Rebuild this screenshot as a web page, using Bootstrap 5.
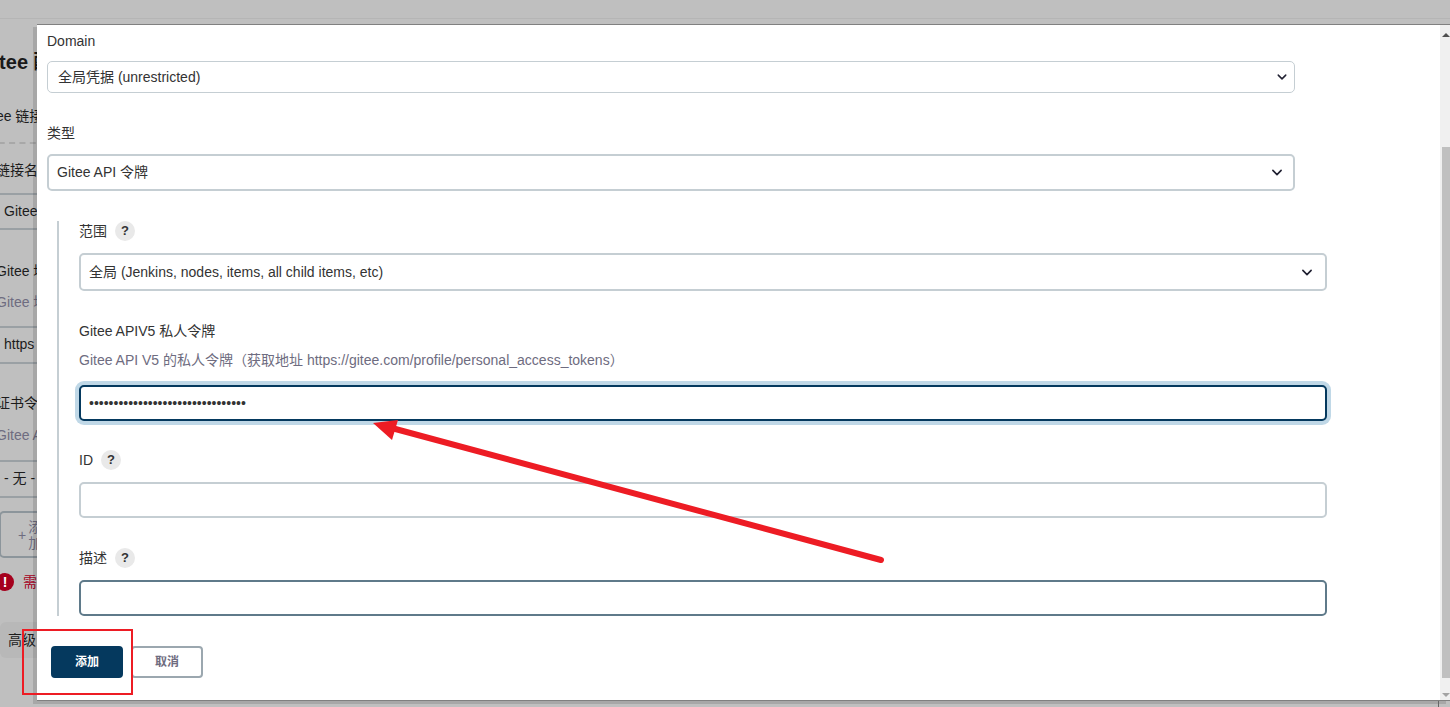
<!DOCTYPE html>
<html lang="zh">
<head>
<meta charset="utf-8">
<title>Gitee</title>
<link href="https://cdn.jsdelivr.net/npm/bootstrap@5.3.0/dist/css/bootstrap.min.css" rel="stylesheet">
<style>
html,body{height:100%;margin:0;overflow:hidden}
body{background:#bfbfbf;font-family:"Liberation Sans","Noto Sans CJK SC",sans-serif;font-size:14px;color:#333;position:relative}
.topbar{height:19px;border-bottom:1px solid #b5b5b5}
.behind{margin-left:-22px;width:120px;height:688px;color:#1c1c1c}
.behind h1{font-size:20px;font-weight:700;line-height:24px;margin:31px 0 0 0;color:#1a1a1a;white-space:nowrap}
.bg-t{line-height:16px;white-space:nowrap;padding-left:18px}
.bg-intro{margin-top:34px;padding-left:0}
.bg-help{color:#6e6c80}
.bg-dash{border-top:2px dashed #a8a8a8;margin-top:18px}
.bg-in{border:2px solid #9aa0a4;border-left:0;border-right:0;line-height:32px;padding-left:26px;white-space:nowrap}
.lb1{margin-top:18px}.in1{margin-top:15px;height:37px}
.lb2{margin-top:33px}.hp2{margin-top:15px}.in2{margin-top:16px;height:38px}
.lb3{margin-top:31px}.hp3{margin-top:16px}.in3{margin-top:17px;height:38px}
.bg-add{border:2px solid #8c959b;border-radius:5px;height:47px;width:100px;margin:13px 0 0 21px;display:flex;align-items:center;padding-left:17px;gap:2px;color:#6e6c80;line-height:16px}
.bg-err{color:#a5001d;margin-left:18px;margin-top:14px;height:20px;gap:9px;white-space:nowrap}
.err-dot{width:18px;height:18px;border-radius:50%;background:#a5001d;color:#fff;font-weight:700;text-align:center;line-height:18px;flex:none}
.bg-adv{background:#b8b8b8;border-radius:6px;width:100px;height:36px;margin:30px 0 0 22px;padding-left:8px;line-height:36px}
.dlg{position:absolute;left:37px;top:24px;width:1413px;height:677px;background:#fff;border-top:1px solid #808080;border-bottom:1px solid #808080;box-shadow:-4px 3px 0 0 rgba(0,0,0,.12);overflow:hidden}
.dlg-body{padding:6px 145px 0 10px;height:100%;width:1403px}
.fld-lbl{line-height:16px;margin:0;color:#333;display:flex;align-items:center;gap:8px;height:20px}
.dlg .form-select,.dlg .form-control{font-size:14px;color:#333;border-radius:5px;border:2px solid #c5ced3;box-shadow:none;padding:0 8px;font-family:inherit;height:36px;margin-top:12px}
.dlg .form-select{height:38px;background-size:14px 11px;background-position:right 11px center;--bs-form-select-bg-img:url("data:image/svg+xml,%3csvg xmlns='http://www.w3.org/2000/svg' viewBox='0 0 16 16'%3e%3cpath fill='none' stroke='%23222233' stroke-linecap='round' stroke-linejoin='round' stroke-width='2.4' d='m2 5 6 6 6-6'/%3e%3c/svg%3e")}
.dlg .sel-thin{border-width:1px;height:32px;margin-top:10px;padding-left:10px;background-position:right 6px center;background-size:12px 10px}
.dlg .sel-type{height:37px;margin-top:11px;background-position:right 9px center}
.l-type{margin-top:30px}
.nest{margin:30px -32px 0 10px;border-left:2px solid #c5ced3;padding:0 0 0 20px;height:395px}
.qm{width:20px;height:20px;border-radius:50%;background:#e9e9e9;color:#333;font-weight:700;font-size:13px;text-align:center;line-height:20px;flex:none}
.hlp{color:#6e6c80;line-height:16px;margin-top:11px}
.l-next{margin-top:30px}
.l-id{margin-top:29px}
.dlg .pw-in,.dlg .pw-in:focus{border-color:#05395e;box-shadow:0 0 0 4px #c0d8e7;margin-top:17px}
.dlg .dark{border-color:#5f7a8a}
.acts{margin:30px 0 0 4px;gap:8px}
.btn-add,.btn-cancel{width:72px;height:32px;font-size:12px;font-weight:700;border-radius:4px;padding:0;line-height:28px;font-family:inherit}
.btn-add{background:#05395e;color:#fff;border:2px solid #05395e}
.btn-cancel{background:#fff;color:#6e6c80;border:2px solid #9ba7af}
.sbar{position:absolute;right:0;top:0;bottom:0;width:10px;background:#f0f0f0}
.sthumb{position:absolute;left:2px;right:0;top:122px;height:531px;background:#c0c0c0}
.sbar i{position:absolute;left:2px;width:0;height:0;border-left:4px solid transparent;border-right:4px solid transparent}
.up{top:8px;border-bottom:4px solid #505050}
.dn{bottom:3px;border-top:4px solid #a3a3a3}
.anno{position:absolute;left:0;top:0;width:1450px;height:707px;pointer-events:none}
</style>
</head>
<body>
<div class="topbar"></div>
<div class="behind">
  <h1>Gitee 配置</h1>
  <div class="bg-t bg-intro">Gitee 链接</div>
  <div class="bg-dash"></div>
  <div class="bg-t lb1">链接名</div>
  <div class="bg-in in1">Gitee</div>
  <div class="bg-t lb2">Gitee 域名</div>
  <div class="bg-t bg-help hp2">Gitee 域名</div>
  <div class="bg-in in2">https</div>
  <div class="bg-t lb3">证书令牌</div>
  <div class="bg-t bg-help hp3">Gitee API</div>
  <div class="bg-in in3">- 无 -</div>
  <div class="bg-add"><span>+</span><span>添<br>加</span></div>
  <div class="bg-err d-flex align-items-center"><span class="err-dot">!</span><span>需要</span></div>
  <div class="bg-adv">高级</div>
</div>

<div class="dlg">
  <div class="dlg-body">
    <label class="fld-lbl form-label">Domain</label>
    <select class="form-select sel-thin"><option>全局凭据 (unrestricted)</option></select>
    <label class="fld-lbl form-label l-type">类型</label>
    <select class="form-select sel-type"><option>Gitee API 令牌</option></select>
    <div class="nest">
      <label class="fld-lbl form-label">范围 <span class="qm">?</span></label>
      <select class="form-select"><option>全局 (Jenkins, nodes, items, all child items, etc)</option></select>
      <label class="fld-lbl form-label l-next">Gitee APIV5 私人令牌</label>
      <div class="hlp">Gitee API V5 的私人令牌（获取地址 https://gitee.com/profile/personal_access_tokens）</div>
      <input class="form-control pw-in" type="password" value="12345678901234567890123456789012">
      <label class="fld-lbl form-label l-id">ID <span class="qm">?</span></label>
      <input class="form-control" type="text">
      <label class="fld-lbl form-label l-next">描述 <span class="qm">?</span></label>
      <input class="form-control dark" type="text">
    </div>
    <div class="acts d-flex">
      <button class="btn btn-add" type="button">添加</button>
      <button class="btn btn-cancel" type="button">取消</button>
    </div>
  </div>
  <div class="sbar"><i class="up"></i><div class="sthumb"></div><i class="dn"></i></div>
</div>

<svg class="anno" viewBox="0 0 1450 707" aria-hidden="true">
  <path d="M881 560 L388 427" stroke="#ed1c24" stroke-width="6" stroke-linecap="round" fill="none"/>
  <path d="M373 423 L398 420 L392 440 Z" fill="#ed1c24"/>
  <rect x="23" y="630" width="109" height="64" fill="none" stroke="#ed1c24" stroke-width="2"/>
  <rect x="1438" y="701" width="1" height="6" fill="#666"/>
</svg>
</body>
</html>
